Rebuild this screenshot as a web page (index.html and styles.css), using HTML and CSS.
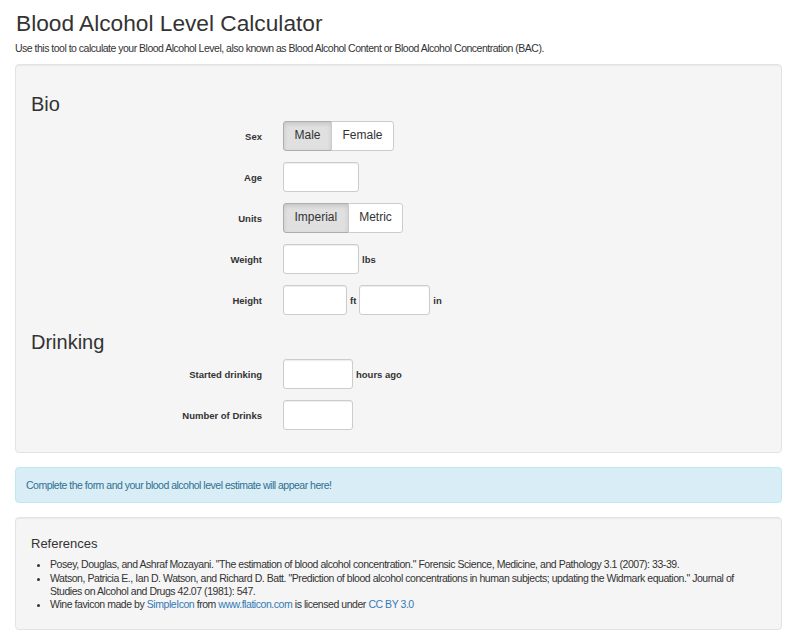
FILE: index.html
```html
<!DOCTYPE html>
<html lang="en">
<head>
<meta charset="utf-8">
<title>Blood Alcohol Level Calculator</title>
<link rel="stylesheet" href="styles.css">
</head>
<body>
<div class="container">
  <h1 class="title">Blood Alcohol Level Calculator</h1>
  <p class="lead">Use this tool to calculate your Blood Alcohol Level, also known as Blood Alcohol Content or Blood Alcohol Concentration (BAC).</p>

  <form class="well form">
    <h3 class="section">Bio</h3>
    <div class="row">
      <label class="label">Sex</label>
      <div class="controls">
        <div class="btn-group">
          <span class="btn active">Male</span><span class="btn">Female</span>
        </div>
      </div>
    </div>
    <div class="row">
      <label class="label">Age</label>
      <div class="controls"><input class="input w76" type="text"></div>
    </div>
    <div class="row">
      <label class="label">Units</label>
      <div class="controls">
        <div class="btn-group">
          <span class="btn active">Imperial</span><span class="btn">Metric</span>
        </div>
      </div>
    </div>
    <div class="row">
      <label class="label">Weight</label>
      <div class="controls"><input class="input w76" type="text"><span class="unit">lbs</span></div>
    </div>
    <div class="row">
      <label class="label">Height</label>
      <div class="controls"><input class="input w64" type="text"><span class="unit">ft</span><input class="input w71" type="text"><span class="unit">in</span></div>
    </div>

    <h3 class="section">Drinking</h3>
    <div class="row">
      <label class="label">Started drinking</label>
      <div class="controls"><input class="input w70" type="text"><span class="unit">hours ago</span></div>
    </div>
    <div class="row">
      <label class="label">Number of Drinks</label>
      <div class="controls"><input class="input w70" type="text"></div>
    </div>
  </form>

  <div class="alert">Complete the form and your blood alcohol level estimate will appear here!</div>

  <div class="well refs">
    <h4 class="refs-title">References</h4>
    <ul class="refs-list">
      <li>Posey, Douglas, and Ashraf Mozayani. "The estimation of blood alcohol concentration." Forensic Science, Medicine, and Pathology 3.1 (2007): 33-39.</li>
      <li>Watson, Patricia E., Ian D. Watson, and Richard D. Batt. "Prediction of blood alcohol concentrations in human subjects; updating the Widmark equation." Journal of Studies on Alcohol and Drugs 42.07 (1981): 547.</li>
      <li>Wine favicon made by <a href="#">SimpleIcon</a> from <a href="#">www.flaticon.com</a> is licensed under <a href="#">CC BY 3.0</a></li>
    </ul>
  </div>
</div>
</body>
</html>
```

FILE: styles.css
```css
* { box-sizing: border-box; }
html, body { margin: 0; padding: 0; background: #fff; }
body {
  font-family: "Liberation Sans", Arial, Helvetica, sans-serif;
  font-size: 10.5px;
  line-height: 15px;
  color: #333;
}
.container {
  width: 767px;
  margin-left: 15px;
}
.title {
  font-size: 22.7px;
  font-weight: 400;
  line-height: 1.1;
  margin: 11px 0 5px 1px;
  color: #333;
}
.lead {
  margin: 0 0 8px 0;
  letter-spacing: -0.5px;
}
.well {
  background: #f5f5f5;
  border: 1px solid #e3e3e3;
  border-radius: 4px;
  box-shadow: inset 0 1px 1px rgba(0,0,0,.05);
}
.form {
  padding: 12px 15px 11px 15px;
  margin: 0;
}
.section {
  font-size: 20px;
  font-weight: 400;
  line-height: 22px;
  margin: 16px 0 6px 0;
  color: #333;
}
.row {
  display: flex;
  align-items: center;
  height: 30px;
  margin-bottom: 11px;
}
.label {
  width: 231px;
  margin-right: 21px;
  text-align: right;
  font-weight: 700;
  font-size: 9.5px;
  padding-top: 2px;
}
.controls {
  display: flex;
  align-items: center;
  height: 30px;
}
.btn-group {
  display: flex;
  height: 30px;
}
.btn {
  display: flex;
  align-items: center;
  height: 30px;
  padding: 0 10.5px;
  font-size: 12px;
  background: #fff;
  border: 1px solid #ccc;
  color: #333;
}
.btn:first-child {
  border-radius: 3px 0 0 3px;
}
.btn + .btn {
  margin-left: -1px;
  border-radius: 0 3px 3px 0;
}
.btn.active {
  background: #e0e0e0;
  border-color: #adadad;
  box-shadow: inset 0 2px 4px rgba(0,0,0,.125);
}
.input {
  height: 30px;
  border: 1px solid #ccc;
  border-radius: 3px;
  background: #fff;
  box-shadow: inset 0 1px 1px rgba(0,0,0,.075);
  margin: 0;
  padding: 0 8px;
  font: inherit;
}
.w76 { width: 76px; }
.w64 { width: 64px; }
.w71 { width: 71px; }
.w70 { width: 70px; }
.unit {
  font-weight: 700;
  font-size: 9.5px;
  margin: 2px 3px 0 3px;
}
.alert {
  margin-top: 14px;
  background: #d9edf7;
  border: 1px solid #bce8f1;
  border-radius: 4px;
  color: #31708f;
  padding: 10px 10px 9px 10px;
  letter-spacing: -0.5px;
}
.refs {
  margin-top: 14px;
  padding: 18px 15px 17px 15px;
}
.refs-title {
  font-size: 13px;
  font-weight: 400;
  line-height: 15px;
  margin: 0 0 7.5px 0;
}
.refs-list {
  margin: 0;
  padding-left: 19px;
  line-height: 13.3px;
  letter-spacing: -0.45px;
}
.refs-list a {
  color: #337ab7;
  text-decoration: none;
}
```
